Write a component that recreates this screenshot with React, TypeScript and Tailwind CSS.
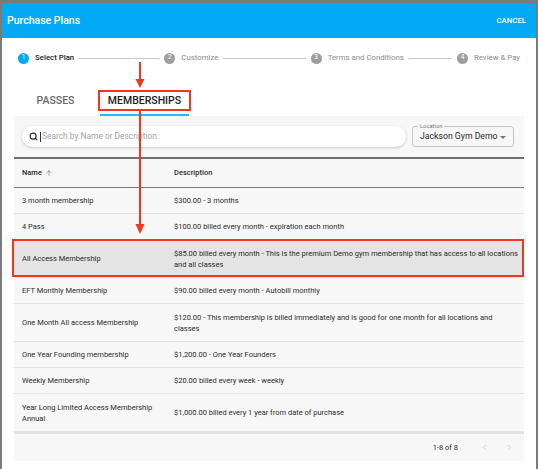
import { ArrowUp, ChevronLeft, ChevronRight, Search } from 'lucide-react';

type Plan = {
    name: string[];
    description: string[];
    selected?: boolean;
};

// multi-line cells are split the way the table lays them out at this width
const plans: Plan[] = [
    { name: ['3 month membership'], description: ['$300.00 - 3 months'] },
    { name: ['4 Pass'], description: ['$100.00 billed every month - expiration each month'] },
    {
        name: ['All Access Membership'],
        description: [
            '$85.00 billed every month - This is the premium Demo gym membership that has access to all locations',
            'and all classes',
        ],
        selected: true,
    },
    { name: ['EFT Monthly Membership'], description: ['$90.00 billed every month - Autobill monthly'] },
    {
        name: ['One Month All access Membership'],
        description: [
            '$120.00 - This membership is billed immediately and is good for one month for all locations and',
            'classes',
        ],
    },
    { name: ['One Year Founding membership'], description: ['$1,200.00 - One Year Founders'] },
    { name: ['Weekly Membership'], description: ['$20.00 billed every week - weekly'] },
    {
        name: ['Year Long Limited Access Membership', 'Annual'],
        description: ['$1,000.00 billed every 1 year from date of purchase'],
    },
];

const steps = ['Select Plan', 'Customize', 'Terms and Conditions', 'Review & Pay'];

function Stepper() {
    return (
        <div className="flex h-[40px] items-center px-[16px]">
            {steps.map((label, i) => (
                <div key={label} className={`flex items-center ${i < steps.length - 1 ? 'flex-1' : ''}`}>
                    <span
                        className={`flex h-[11px] w-[11px] shrink-0 items-center justify-center rounded-full text-[6.5px] text-white ${
                            i === 0 ? 'bg-[#03a9f4]' : 'bg-[#9e9e9e]'
                        }`}
                    >
                        {i + 1}
                    </span>
                    <span
                        className={`ml-[6px] whitespace-nowrap text-[7.8px] ${
                            i === 0 ? 'font-medium text-[#212121]' : 'text-[#8a8a8a]'
                        }`}
                    >
                        {label}
                    </span>
                    {i < steps.length - 1 && <div className="mx-[5px] h-px flex-1 bg-[#c8c8c8]" />}
                </div>
            ))}
        </div>
    );
}

function Tabs() {
    return (
        <div className="ml-[9px] flex h-[38px]">
            <div className="flex w-[89px] items-center justify-center pt-[7px] text-[10.5px] font-medium text-[#6b6b6b]">
                PASSES
            </div>
            <div className="relative flex w-[89px] items-center justify-center pt-[7px] text-[10.5px] font-medium text-[#212121]">
                MEMBERSHIPS
                <div className="absolute inset-x-0 bottom-0 h-[2px] bg-[#29b6f6]" />
                {/* red callout box */}
                <div className="absolute -left-[2px] -right-[2px] top-[12px] h-[21px] border-2 border-[#f3361f]" />
            </div>
        </div>
    );
}

function Toolbar() {
    return (
        <div className="flex gap-[6px] px-[8px] pt-[10px]">
            <div className="flex h-[21px] flex-1 items-center rounded-full bg-white pl-[7px] shadow-[0_1px_3px_rgba(0,0,0,0.18)]">
                <Search size={9} strokeWidth={3} className="text-[#2a2a2a]" />
                <span className="ml-[2px] h-[10px] w-px bg-[#333]" />
                <span className="ml-px text-[8.4px] text-[#a3a3a3]">Search by Name or Description.</span>
            </div>
            <div className="relative mr-[2px] flex h-[21px] w-[102px] items-center rounded-[3px] border border-[#c4c4c4] pl-[7px]">
                <span className="absolute -top-[5px] left-[5px] bg-[#f7f7f7] px-[2px] text-[5.8px] leading-[8px] text-[#777]">
                    Location
                </span>
                <span className="whitespace-nowrap text-[8.7px] text-[#2a2a2a]">Jackson Gym Demo</span>
                <svg className="absolute right-[7px] top-[9px]" width="6" height="3" viewBox="0 0 6 3">
                    <path d="M0 0 L6 0 L3 3 Z" fill="#757575" />
                </svg>
            </div>
        </div>
    );
}

function PlanRow({ plan }: { plan: Plan }) {
    const tall = plan.name.length > 1 || plan.description.length > 1;
    return (
        <div
            className={`relative flex items-center whitespace-nowrap border-b border-[#e2e2e2] px-[8px] text-[7.5px] leading-[11px] text-[#2b2b2b] ${
                tall ? 'h-[38px]' : 'h-[26px]'
            } ${plan.selected ? 'bg-[#e4e4e4]' : ''}`}
        >
            <div className="flex w-[152px] shrink-0 flex-col">
                {plan.name.map((line) => (
                    <span key={line}>{line}</span>
                ))}
            </div>
            <div className="flex flex-1 flex-col">
                {plan.description.map((line) => (
                    <span key={line}>{line}</span>
                ))}
            </div>
            {plan.selected && (
                <div className="absolute -left-[2px] right-0 -top-px bottom-0 border-2 border-[#f3361f]" />
            )}
        </div>
    );
}

function PlanTable() {
    return (
        <div className="mt-[10px] border-t-2 border-[#6e6e6e]">
            <div className="flex h-[29px] items-center border-b border-[#7a7a7a] px-[8px] text-[7.5px] font-medium text-[#2b2b2b]">
                <div className="flex w-[152px] shrink-0 items-center gap-[3px]">
                    Name
                    <ArrowUp size={8} strokeWidth={2} className="text-[#7a7a7a]" />
                </div>
                <div>Description</div>
            </div>
            {plans.map((plan) => (
                <PlanRow key={plan.name[0]} plan={plan} />
            ))}
            <div className="flex h-[29px] items-center justify-end border-t-2 border-[#e2e2e2] pr-[10px] text-[7.5px] text-[#2b2b2b]">
                <span>1-8 of 8</span>
                <ChevronLeft size={9} className="ml-[22px] text-[#c2c2c2]" />
                <ChevronRight size={9} className="ml-[16px] text-[#c2c2c2]" />
            </div>
        </div>
    );
}

export default function App() {
    return (
        <div className="h-[469px] w-[538px] overflow-hidden bg-[#7b7b7b] px-[2px] font-['Roboto',sans-serif]">
            {/* page behind the overlay, only its bottom edge peeks through */}
            <div className="relative h-[3px] overflow-hidden">
                <span className="absolute -top-[11px] left-[26px] text-[12px] leading-[14px] font-medium text-[#3a3a3a]">
                    Purchase Plans
                </span>
            </div>
            <div className="relative h-[466px] bg-white">
                <div className="flex h-[35px] items-center justify-between bg-[#03a9f4] pl-[5px] pr-[10px] text-white">
                    <span className="text-[10.5px] font-medium">Purchase Plans</span>
                    <span className="text-[7.8px] font-medium">CANCEL</span>
                </div>
                <Stepper />
                <Tabs />
                <div className="mx-[12px] bg-[#f7f7f7]">
                    <Toolbar />
                    <PlanTable />
                </div>

                {/* red annotation arrows */}
                <svg className="pointer-events-none absolute left-0 top-0" width="534" height="466">
                    <line x1="138" y1="59" x2="138" y2="77" stroke="#f3361f" strokeWidth="2" />
                    <path d="M133.5 76 L142.5 76 L138 85 Z" fill="#f3361f" />
                    <line x1="138" y1="108" x2="138" y2="222" stroke="#f3361f" strokeWidth="2" />
                    <path d="M133.5 221 L142.5 221 L138 231 Z" fill="#f3361f" />
                </svg>
            </div>
        </div>
    );
}
